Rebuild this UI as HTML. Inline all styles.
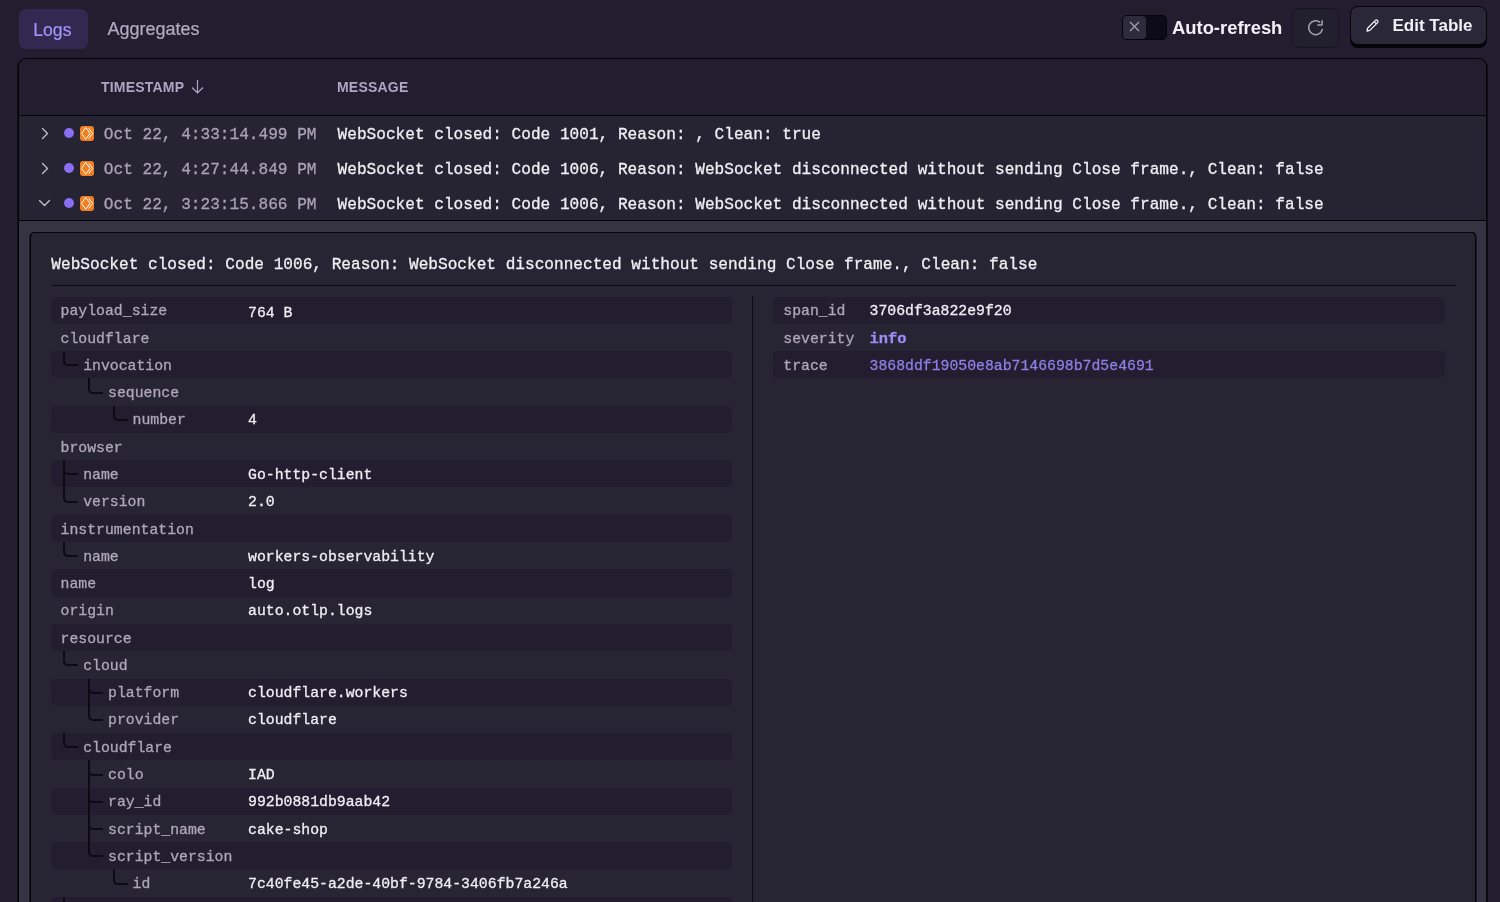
<!DOCTYPE html>
<html><head><meta charset="utf-8">
<style>
*{box-sizing:border-box;margin:0;padding:0}
html,body{width:1500px;height:902px;overflow:hidden;background:#221e2f;font-family:"Liberation Sans",sans-serif;color:#f0eef5}
.abs{position:absolute}
#tabLogs{left:18.5px;top:9px;width:69px;height:40px;border-radius:7px;background:#31294f}
#tabLogs span{position:absolute;left:14.8px;top:10.5px;font-size:17.6px;line-height:20px;color:#a294fa;-webkit-text-stroke:0.2px currentColor}
#tabAgg{left:107.5px;top:19px;font-size:18px;line-height:20px;color:#b4acc3;-webkit-text-stroke:0.2px currentColor}
#toggle{left:1122px;top:14.5px;width:44.5px;height:25.5px;border-radius:5px;background:#0d0b17;border:1px solid #050409}
#knob{left:0px;top:0px;width:23px;height:23px;border-radius:4px;background:#2e2b3c}
#autoTxt{left:1172px;top:18px;font-size:18.4px;line-height:20px;font-weight:700;color:#f2f0f7}
#refresh{left:1292px;top:8px;width:47px;height:39.5px;border-radius:7px;background:#221f2f;border:1px solid #17151f}
#edit{left:1349.5px;top:6px;width:137.5px;height:38.5px;border-radius:8px;background:#2a2739;border:1px solid #050409;box-shadow:0 3px 0 #050408}
#editTxt{left:42px;top:8.7px;font-size:17px;line-height:20px;font-weight:700;color:#f2f0f7}
#table{left:18px;top:58px;width:1469px;height:900px;border:1px solid #050409;border-radius:9px;box-shadow:-0.6px 0 0 #050409,0.6px 0 0 #050409;background:#262332;overflow:hidden}
#thead{position:absolute;left:0;top:0;width:100%;height:57px;background:#221e30;border-bottom:1px solid #050409}
.th{position:absolute;top:20px;font-size:14px;line-height:16px;font-weight:700;color:#afa6c2;letter-spacing:0.2px}
.row{position:absolute;left:0;width:100%;height:35px}
.chev{position:absolute;left:22px;top:11px}
.dot{position:absolute;left:45px;top:12px;width:10px;height:10px;border-radius:50%;background:#8a6ff5}
.wk{position:absolute;left:60.7px;top:9.9px;width:14.6px;height:15px;border-radius:3px;background:#f38020}
.mono{font-family:"Liberation Mono",monospace;-webkit-text-stroke:0.3px currentColor}
.ts{position:absolute;left:84.8px;top:10px;font-size:16.13px;line-height:19px;color:#a9a1b8;white-space:pre}
.msg{position:absolute;left:318.6px;top:10px;font-size:16.13px;line-height:19px;color:#f0eef5;white-space:pre}
#band{position:absolute;left:0;top:161px;width:100%;height:800px;background:#363343;border-top:1px solid #050409}
#card{position:absolute;left:11px;top:10.5px;width:1446px;height:900px;background:#272433;border:1px solid #050409;border-radius:5px;box-shadow:0.6px 0 0 #0a090f,-0.6px 0 0 #0a090f}
#cmsg{position:absolute;left:20.3px;top:23.3px;font-size:16.13px;line-height:19px;color:#f0eef5;white-space:pre}
#sep{position:absolute;left:20px;top:52px;width:1405px;height:1px;background:#0c0a12}
#vdiv{position:absolute;left:720.5px;top:63.5px;width:1.5px;height:900px;background:#0c0a12}
.kv{position:absolute;height:27.2px;border-radius:5px}
.kv.s{background:#221e2f}
.k{position:absolute;top:5.7px;font-size:14.8px;line-height:19px;color:#aea7ba;white-space:pre}
.v{position:absolute;top:5.7px;font-size:14.8px;line-height:19px;color:#f0eef5;white-space:pre}
.tl{position:absolute;border-left:2px solid #0c0a12;border-bottom:2px solid #0c0a12;border-bottom-left-radius:5px}
.tv{position:absolute;width:2px;background:#0c0a12}
</style></head><body><div id="root" style="position:absolute;left:0;top:0;width:1500px;height:902px;will-change:transform;overflow:hidden">
<div id="tabLogs" class="abs"><span>Logs</span></div>
<div id="tabAgg" class="abs">Aggregates</div>
<div id="toggle" class="abs"><div id="knob" class="abs">
<svg class="abs" style="left:5.6px;top:5.6px" width="11" height="11" viewBox="0 0 11 11"><path d="M1 1L10 10M10 1L1 10" stroke="#a69fb8" stroke-width="1.3" fill="none"/></svg>
</div></div>
<div id="autoTxt" class="abs">Auto-refresh</div>
<div id="refresh" class="abs">
<svg class="abs" style="left:14px;top:11px" width="18" height="18" viewBox="0 0 18 18"><path d="M15.3 9.5A6.9 6.9 0 1 1 12.6 2.1" stroke="#a6a0b0" stroke-width="1.5" fill="none" stroke-linecap="round"/><path d="M15.1 0.8V4.9H10.9" stroke="#a6a0b0" stroke-width="1.5" fill="none" stroke-linecap="round" stroke-linejoin="round"/></svg>
</div>
<div id="edit" class="abs">
<svg class="abs" style="left:14px;top:10.5px" width="15" height="15" viewBox="0 0 15 15"><path d="M2 13L2.6 10.2L10.4 2.4A1.4 1.4 0 0 1 12.4 2.4L12.6 2.6A1.4 1.4 0 0 1 12.6 4.6L4.8 12.4Z M9.2 3.6L11.4 5.8" stroke="#f2f0f7" stroke-width="1.3" fill="none" stroke-linejoin="round"/></svg>
<div id="editTxt" class="abs">Edit Table</div>
</div>
<div id="table" class="abs">
 <div id="thead">
  <div class="th" style="left:82px">TIMESTAMP</div>
  <svg class="abs" style="left:172px;top:20.2px" width="13" height="15" viewBox="0 0 13 15"><path d="M6.5 1V14M1 8.5L6.5 14L12 8.5" stroke="#afa6c2" stroke-width="1.2" fill="none"/></svg>
  <div class="th" style="left:318px">MESSAGE</div>
 </div>
 <div id="rows"><div class="row" style="top:57px"><svg class="chev" width="8" height="13" viewBox="0 0 8 13"><path d="M1.5 1.5L6.5 6.5L1.5 11.5" stroke="#c6c1cf" stroke-width="1.3" fill="none" stroke-linecap="round" stroke-linejoin="round"/></svg><div class="dot"></div><div class="wk"><svg width="15" height="15" viewBox="0 0 15 15" style="position:absolute;left:0;top:0"><path d="M1.5 7.4L5.7 1.4L10 7.4L5.7 13.2Z M8.7 2.3L12.7 7.4L8.7 12.5" stroke="#fff" stroke-width="1" fill="none" stroke-linejoin="miter"/></svg></div><div class="ts mono">Oct 22, 4:33:14.499 PM</div><div class="msg mono">WebSocket closed: Code 1001, Reason: , Clean: true</div></div>
<div class="row" style="top:92px"><svg class="chev" width="8" height="13" viewBox="0 0 8 13"><path d="M1.5 1.5L6.5 6.5L1.5 11.5" stroke="#c6c1cf" stroke-width="1.3" fill="none" stroke-linecap="round" stroke-linejoin="round"/></svg><div class="dot"></div><div class="wk"><svg width="15" height="15" viewBox="0 0 15 15" style="position:absolute;left:0;top:0"><path d="M1.5 7.4L5.7 1.4L10 7.4L5.7 13.2Z M8.7 2.3L12.7 7.4L8.7 12.5" stroke="#fff" stroke-width="1" fill="none" stroke-linejoin="miter"/></svg></div><div class="ts mono">Oct 22, 4:27:44.849 PM</div><div class="msg mono">WebSocket closed: Code 1006, Reason: WebSocket disconnected without sending Close frame., Clean: false</div></div>
<div class="row" style="top:127px"><svg class="chev" style="left:19px;top:13.1px" width="13" height="8" viewBox="0 0 13 8"><path d="M1.5 1.5L6.5 6.5L11.5 1.5" stroke="#c6c1cf" stroke-width="1.3" fill="none" stroke-linecap="round" stroke-linejoin="round"/></svg><div class="dot"></div><div class="wk"><svg width="15" height="15" viewBox="0 0 15 15" style="position:absolute;left:0;top:0"><path d="M1.5 7.4L5.7 1.4L10 7.4L5.7 13.2Z M8.7 2.3L12.7 7.4L8.7 12.5" stroke="#fff" stroke-width="1" fill="none" stroke-linejoin="miter"/></svg></div><div class="ts mono">Oct 22, 3:23:15.866 PM</div><div class="msg mono">WebSocket closed: Code 1006, Reason: WebSocket disconnected without sending Close frame., Clean: false</div></div>
</div>
 <div id="band">
  <div id="card">
   <div id="cmsg" class="mono">WebSocket closed: Code 1006, Reason: WebSocket disconnected without sending Close frame., Clean: false</div>
   <div id="sep"></div>
   <div id="vdiv"></div>
   <div id="kvs"><div class="kv s" style="left:20px;top:64.10px;width:681px"><div class="k mono" style="left:9.6px">payload_size</div><div class="v mono" style="left:197px;top:7.2px">764 B</div></div>
<div class="kv" style="left:20px;top:91.38px;width:681px"><div class="k mono" style="left:9.6px">cloudflare</div></div>
<div class="kv s" style="left:20px;top:118.66px;width:681px"><div class="tl" style="left:12.00px;top:0;width:15.00px;height:15.20px"></div><div class="k mono" style="left:32.2px">invocation</div></div>
<div class="kv" style="left:20px;top:145.94px;width:681px"><div class="tl" style="left:36.80px;top:0;width:15.20px;height:15.20px"></div><div class="k mono" style="left:57px">sequence</div></div>
<div class="kv s" style="left:20px;top:173.22px;width:681px"><div class="tl" style="left:61.50px;top:0;width:15.50px;height:15.20px"></div><div class="k mono" style="left:81.6px">number</div><div class="v mono" style="left:197px">4</div></div>
<div class="kv" style="left:20px;top:200.50px;width:681px"><div class="k mono" style="left:9.6px">browser</div></div>
<div class="kv s" style="left:20px;top:227.78px;width:681px"><div class="tv" style="left:12.00px;top:0;height:27.28px"></div><div class="tl" style="left:12.00px;top:7.20px;width:15.00px;height:8.00px"></div><div class="k mono" style="left:32.2px">name</div><div class="v mono" style="left:197px">Go-http-client</div></div>
<div class="kv" style="left:20px;top:255.06px;width:681px"><div class="tl" style="left:12.00px;top:0;width:15.00px;height:15.20px"></div><div class="k mono" style="left:32.2px">version</div><div class="v mono" style="left:197px">2.0</div></div>
<div class="kv s" style="left:20px;top:282.34px;width:681px"><div class="k mono" style="left:9.6px">instrumentation</div></div>
<div class="kv" style="left:20px;top:309.62px;width:681px"><div class="tl" style="left:12.00px;top:0;width:15.00px;height:15.20px"></div><div class="k mono" style="left:32.2px">name</div><div class="v mono" style="left:197px">workers-observability</div></div>
<div class="kv s" style="left:20px;top:336.90px;width:681px"><div class="k mono" style="left:9.6px">name</div><div class="v mono" style="left:197px">log</div></div>
<div class="kv" style="left:20px;top:364.18px;width:681px"><div class="k mono" style="left:9.6px">origin</div><div class="v mono" style="left:197px">auto.otlp.logs</div></div>
<div class="kv s" style="left:20px;top:391.46px;width:681px"><div class="k mono" style="left:9.6px">resource</div></div>
<div class="kv" style="left:20px;top:418.74px;width:681px"><div class="tl" style="left:12.00px;top:0;width:15.00px;height:15.20px"></div><div class="k mono" style="left:32.2px">cloud</div></div>
<div class="kv s" style="left:20px;top:446.02px;width:681px"><div class="tv" style="left:36.80px;top:0;height:27.28px"></div><div class="tl" style="left:36.80px;top:7.20px;width:15.20px;height:8.00px"></div><div class="k mono" style="left:57px">platform</div><div class="v mono" style="left:197px">cloudflare.workers</div></div>
<div class="kv" style="left:20px;top:473.30px;width:681px"><div class="tl" style="left:36.80px;top:0;width:15.20px;height:15.20px"></div><div class="k mono" style="left:57px">provider</div><div class="v mono" style="left:197px">cloudflare</div></div>
<div class="kv s" style="left:20px;top:500.58px;width:681px"><div class="tl" style="left:12.00px;top:0;width:15.00px;height:15.20px"></div><div class="k mono" style="left:32.2px">cloudflare</div></div>
<div class="kv" style="left:20px;top:527.86px;width:681px"><div class="tv" style="left:36.80px;top:0;height:27.28px"></div><div class="tl" style="left:36.80px;top:7.20px;width:15.20px;height:8.00px"></div><div class="k mono" style="left:57px">colo</div><div class="v mono" style="left:197px">IAD</div></div>
<div class="kv s" style="left:20px;top:555.14px;width:681px"><div class="tv" style="left:36.80px;top:0;height:27.28px"></div><div class="tl" style="left:36.80px;top:7.20px;width:15.20px;height:8.00px"></div><div class="k mono" style="left:57px">ray_id</div><div class="v mono" style="left:197px">992b0881db9aab42</div></div>
<div class="kv" style="left:20px;top:582.42px;width:681px"><div class="tv" style="left:36.80px;top:0;height:27.28px"></div><div class="tl" style="left:36.80px;top:7.20px;width:15.20px;height:8.00px"></div><div class="k mono" style="left:57px">script_name</div><div class="v mono" style="left:197px">cake-shop</div></div>
<div class="kv s" style="left:20px;top:609.70px;width:681px"><div class="tl" style="left:36.80px;top:0;width:15.20px;height:15.20px"></div><div class="k mono" style="left:57px">script_version</div></div>
<div class="kv" style="left:20px;top:636.98px;width:681px"><div class="tl" style="left:61.50px;top:0;width:15.50px;height:15.20px"></div><div class="k mono" style="left:81.6px">id</div><div class="v mono" style="left:197px">7c40fe45-a2de-40bf-9784-3406fb7a246a</div></div>
<div class="kv s" style="left:20px;top:664.26px;width:681px"><div class="tl" style="left:12.00px;top:0;width:15.00px;height:15.20px"></div><div class="k mono" style="left:32.2px">telemetry</div></div>
<div class="kv s" style="left:742px;top:64.10px;width:672px"><div class="k mono" style="left:10.3px">span_id</div><div class="v mono" style="left:96.5px">3706df3a822e9f20</div></div>
<div class="kv" style="left:742px;top:91.38px;width:672px"><div class="k mono" style="left:10.3px">severity</div><div class="v mono" style="left:96.5px;color:#9d8cf7;font-weight:700;font-size:15.4px;top:6.6px">info</div></div>
<div class="kv s" style="left:742px;top:118.66px;width:672px"><div class="k mono" style="left:10.3px">trace</div><div class="v mono" style="left:96.5px;color:#8e7fe6">3868ddf19050e8ab7146698b7d5e4691</div></div>
</div>
  </div>
 </div>
</div>
</div></body></html>
